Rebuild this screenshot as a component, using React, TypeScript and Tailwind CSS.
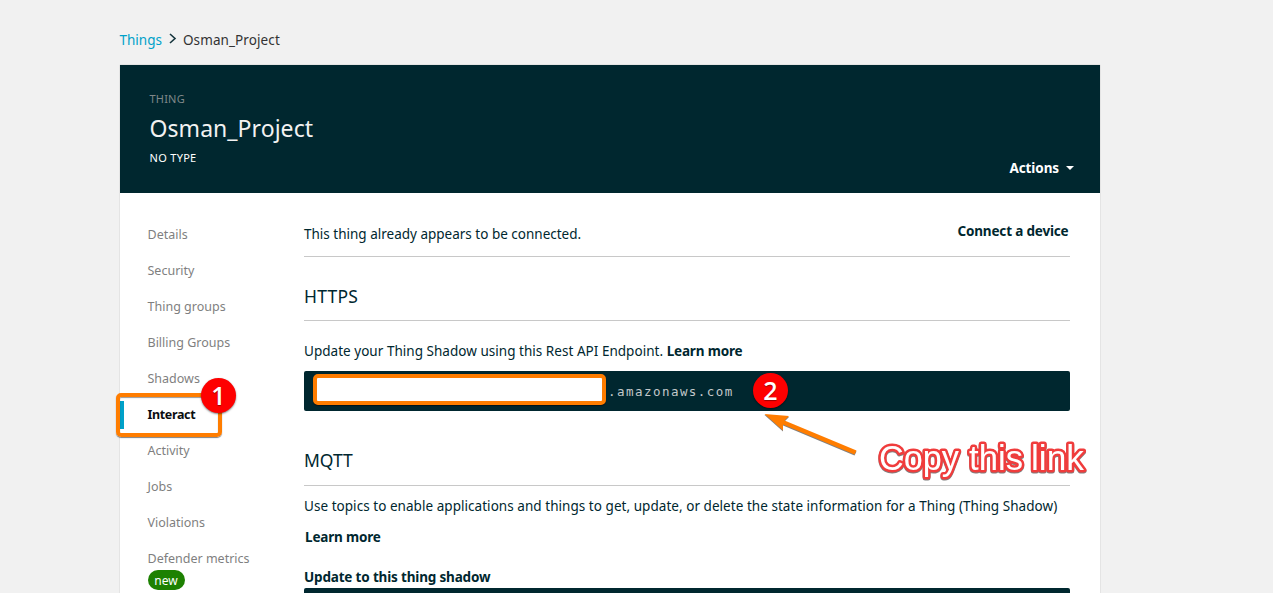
type NavItem = { label: string; active?: boolean; badge?: string };

const NAV: NavItem[] = [
  { label: "Details" },
  { label: "Security" },
  { label: "Thing groups" },
  { label: "Billing Groups" },
  { label: "Shadows" },
  { label: "Interact", active: true },
  { label: "Activity" },
  { label: "Jobs" },
  { label: "Violations" },
  { label: "Defender metrics", badge: "new" },
];

function Sidebar() {
  return (
    <nav className="w-[184px] shrink-0 pt-6">
      {NAV.map((item) => (
        <div key={item.label} className="relative h-9 whitespace-nowrap pl-[27.5px] text-[12.5px] leading-9 text-[#7f7f7f]">
          {item.active && <span className="absolute left-0 top-1 h-7 w-1 bg-[#00a1c9]" />}
          <span className={item.active ? "font-bold tracking-[-0.35px] text-[#0b0d10]" : ""}>{item.label}</span>
          {item.badge && (
            <div className="-mt-[7px] flex h-5 w-[37px] items-center justify-center rounded-full bg-[#1d8102] pt-px text-[12px] leading-5 text-white">
              {item.badge}
            </div>
          )}
        </div>
      ))}
    </nav>
  );
}

function StepBadge({ n, className }: { n: number; className: string }) {
  return (
    <div
      className={`absolute flex size-[35px] items-center justify-center rounded-full bg-[#fe0000] font-['Open_Sans',sans-serif] text-[25px] font-semibold leading-none text-white shadow-[0_1px_2px_rgba(0,0,0,0.5)] [text-shadow:0_1px_1px_rgba(0,0,0,0.4)] ${className}`}
    >
      {n}
    </div>
  );
}

function Annotations() {
  return (
    <>
      <div className="absolute left-[116px] top-[393px] h-[44px] w-[106px] rounded-[5px] border-4 border-[#ff7d00] shadow-[0_1px_1px_rgba(0,0,0,0.5),inset_0_1px_1px_rgba(0,0,0,0.4)]" />
      <StepBadge n={1} className="left-[201px] top-[378px]" />
      <StepBadge n={2} className="left-[753px] top-[373px]" />
      <svg className="absolute left-[755px] top-[405px]" width="110" height="60" viewBox="755 405 110 60">
        <g className="drop-shadow-[0_1px_0.5px_rgba(0,0,0,0.5)]" fill="#ff7d00">
          <path d="M764.5 414L789 416L784.5 420.5L856.5 450.5L854.5 454.5L783 424.5L783 430.5Z" />
        </g>
      </svg>
      <svg className="absolute left-[870px] top-[430px]" width="225" height="60" viewBox="870 430 225 60">
        <g
          className="font-['Liberation_Sans',sans-serif] text-[35px] drop-shadow-[0_1px_0.5px_rgba(0,0,0,0.5)] [paint-order:stroke]"
          fill="#ffffff"
          stroke="#f03c3c"
          strokeWidth="5"
          strokeLinejoin="round"
        >
          <text x="879" y="470" textLength="80" lengthAdjust="spacingAndGlyphs">Copy</text>
          <text x="969" y="470" textLength="54" lengthAdjust="spacingAndGlyphs">this</text>
          <text x="1031" y="470" textLength="53" lengthAdjust="spacingAndGlyphs">link</text>
        </g>
      </svg>
    </>
  );
}

export default function App() {
  return (
    <div className="relative h-[593px] w-full overflow-hidden bg-[#f1f1f1] pl-[120px] font-['Noto_Sans',sans-serif] text-[13.5px] text-[#00272f]">
      <div className="flex h-[65px] items-center pt-[15px] leading-5">
        <span className="-ml-[0.5px] text-[#00a1c9]">Things</span>
        <svg className="-mt-0.5 ml-[6px] mr-[6px]" width="9" height="12" viewBox="0 0 9 12" fill="none" stroke="#16353d" strokeWidth="1.6">
          <path d="M2 1L7 5.5L2 10" />
        </svg>
        <span className="tracking-[0.1px] text-[#333333]">Osman_Project</span>
      </div>
      <div className="h-[560px] w-[980px] bg-white shadow-[0_0_1px_rgba(0,0,0,0.3)]">
        <header className="flex h-32 justify-between bg-[#00272f] pl-[29.5px] pr-[26px]">
          <div className="pt-[26px]">
            <div className="text-[11px] leading-4 tracking-[0.2px] text-[#7f8789]">THING</div>
            <h1 className="mt-[5px] text-[23px] leading-8 tracking-[0.05px] text-[#f2f2f2]">Osman_Project</h1>
            <div className="mt-1.5 text-[11px] leading-4 tracking-[0.3px] text-white">NO TYPE</div>
          </div>
          <div className="mb-[15px] flex h-5 items-center gap-[7px] self-end font-bold tracking-[-0.1px] text-white">
            <span>Actions</span>
            <span className="border-x-4 border-t-4 border-x-transparent border-t-white" />
          </div>
        </header>
        <div className="flex">
          <Sidebar />
          <main className="w-[766px] whitespace-nowrap [&_b]:tracking-[-0.17px]">
            <div className="flex h-16 justify-between border-b border-[#c8c8c8]">
              <span className="mt-[31px] leading-5">This thing already appears to be connected.</span>
              <b className="mr-[1.5px] mt-[28px] leading-5">Connect a device</b>
            </div>
            <h2 className="h-16 border-b border-[#c8c8c8] pt-[27px] text-[17.5px] leading-6 tracking-[0.2px]">HTTPS</h2>
            <p className="mt-5 leading-5 tracking-[0.03px]">
              Update your Thing Shadow using this Rest API Endpoint. <b>Learn more</b>
            </p>
            <div className="mt-[10px] flex h-10 items-center rounded-[2px] bg-[#00272f] pl-[9px]">
              <div className="-mt-[3px] h-[31px] w-[293px] rounded-[5px] border-4 border-[#ff7d00] bg-white shadow-[0_1px_1px_rgba(0,0,0,0.5)]" />
              <span className="ml-[2px] pt-0.5 font-['DejaVu_Sans_Mono',monospace] text-[12.5px] tracking-[1.46px] text-[#c3c8ca]">
                .amazonaws.com
              </span>
            </div>
            <h2 className="h-[75px] border-b border-[#c8c8c8] pt-[37px] text-[17.5px] leading-6">MQTT</h2>
            <p className="mt-[10px] leading-5 tracking-[0.045px]">
              Use topics to enable applications and things to get, update, or delete the state information for a Thing (Thing Shadow)
            </p>
            <b className="ml-px mt-[11px] block leading-5">Learn more</b>
            <b className="mt-5 block leading-5">Update to this thing shadow</b>
            <div className="mt-px h-10 rounded-[2px] bg-[#00272f]" />
          </main>
        </div>
      </div>
      <Annotations />
    </div>
  );
}
